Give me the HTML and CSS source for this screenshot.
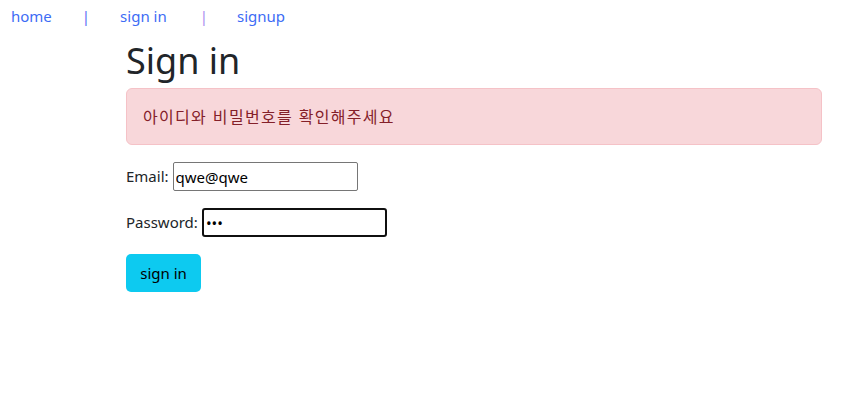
FILE: index.html
```html
<!DOCTYPE html>
<html lang="ko">
<head>
<meta charset="utf-8">
<title>Sign in</title>
<link rel="stylesheet" href="styles.css">
</head>
<body>
<nav class="nav">
  <a class="nav-link" href="#">home</a>
  <span class="sep sep-a">|</span>
  <a class="nav-link" href="#">sign in</a>
  <span class="sep sep-b">|</span>
  <a class="nav-link" href="#">signup</a>
</nav>
<main class="container">
  <h1 class="title">Sign in</h1>
  <div class="alert">아이디와 비밀번호를 확인해주세요</div>
  <form class="form">
    <div class="field">
      <label class="label">Email:</label>
      <input class="input" type="email" value="qwe@qwe">
    </div>
    <div class="field">
      <label class="label">Password:</label>
      <input class="input input-focus" type="password" value="qwe">
    </div>
    <button class="btn" type="button">sign in</button>
  </form>
</main>
</body>
</html>
```
FILE: styles.css
```css
* { box-sizing: border-box; }
html, body { margin: 0; padding: 0; background: #fff; }
body {
  font-family: "Noto Sans", "Noto Sans CJK KR", sans-serif;
  font-size: 15px;
  line-height: 1.5;
  color: #212529;
}
.nav {
  display: flex;
  align-items: center;
  height: 33px;
  padding-left: 11px;
}
.nav-link {
  color: #3d6cf5;
  text-decoration: none;
}
.sep-a { color: #5a6cf5; margin: 0 30px; }
.sep-b { color: #a78bf0; margin: 0 29px 0 33px; }
.container {
  margin-left: 126px;
  width: 696px;
}
.title {
  margin: 4px 0 3px 0;
  font-weight: 400;
  font-size: 36px;
  line-height: 48px;
}
.alert {
  background: #f8d7da;
  border: 1px solid #f5c2c7;
  color: #842029;
  border-radius: 6px;
  padding: 16px;
  height: 57px;
  font-family: "Noto Sans CJK KR", sans-serif;
  font-size: 16px;
  letter-spacing: 1.3px;
  line-height: 23px;
  margin-bottom: 17px;
}
.field {
  display: flex;
  align-items: center;
  margin-bottom: 17px;
  height: 29px;
}
.label { margin-right: 4px; }
.label-email { margin-right: 5px; }
.input {
  width: 185px;
  height: 29px;
  border: 1px solid #767676;
  border-radius: 2px;
  padding: 1px 2px;
  font-family: "Noto Sans", sans-serif;
  font-size: 15px;
  color: #000;
  background: #fff;
}
.input-focus {
  border: 2px solid #101010;
  border-radius: 3px;
  outline: none;
}
.btn {
  display: block;
  width: 75px;
  height: 38px;
  border: none;
  border-radius: 5px;
  background: #0dcaf0;
  color: #000;
  font-family: "Noto Sans", sans-serif;
  font-size: 15px;
  padding: 0;
}
```
